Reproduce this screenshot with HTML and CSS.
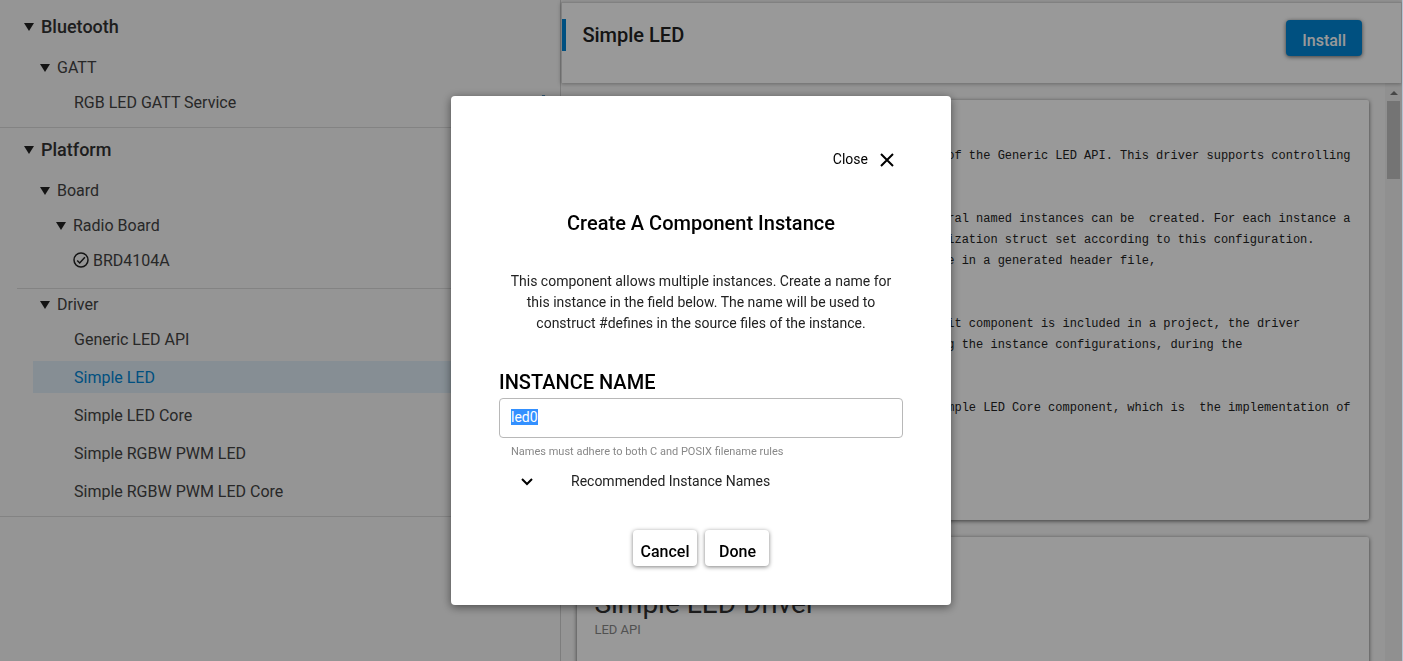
FILE: index.html
```
<!DOCTYPE html>
<html lang="en">
<head>
<meta charset="utf-8">
<title>Software Components</title>
<link rel="stylesheet" href="styles.css">
</head>
<body>
<div class="app">
  <nav class="sidebar" aria-label="Components">
    <section class="category">
      <button class="node node-root" type="button"><svg class="twisty" viewBox="0 0 10 8"><path d="M0 0h10L5 8z"/></svg>Bluetooth</button>
      <div class="group">
        <button class="node" type="button"><svg class="twisty" viewBox="0 0 10 8"><path d="M0 0h10L5 8z"/></svg>GATT</button>
        <a class="leaf" href="#rgb-gatt">RGB LED GATT Service
          <svg class="gear" viewBox="0 0 24 24"><path fill-rule="evenodd" d="M9.500 0h5v4l3 1.500 3.300-2 2.500 4.500-3.300 2v4l3.300 2-2.500 4.500-3.300-2-3 1.500v4h-5v-4l-3-1.500-3.300 2L.7 16l3.300-2v-4L.7 8l2.500-4.500 3.300 2 3-1.500zM12 8a4 4 0 1 0 0 8 4 4 0 0 0 0-8z"/></svg></a>
      </div>
    </section>
    <section class="category">
      <button class="node node-root" type="button"><svg class="twisty" viewBox="0 0 10 8"><path d="M0 0h10L5 8z"/></svg>Platform</button>
      <div class="group group-divided">
        <button class="node" type="button"><svg class="twisty" viewBox="0 0 10 8"><path d="M0 0h10L5 8z"/></svg>Board</button>
        <button class="node node-nested" type="button"><svg class="twisty" viewBox="0 0 10 8"><path d="M0 0h10L5 8z"/></svg>Radio Board</button>
        <a class="leaf leaf-installed" href="#brd4104a"><svg class="installed" viewBox="0 0 16 16"><circle cx="8" cy="8" r="7"/><path d="M4.200 8.500l2.500 2.500 5.200-5.800"/></svg>BRD4104A</a>
      </div>
      <div class="group group-driver">
        <button class="node" type="button"><svg class="twisty" viewBox="0 0 10 8"><path d="M0 0h10L5 8z"/></svg>Driver</button>
        <div class="leaves">
          <a class="leaf" href="#generic">Generic LED API</a>
          <a class="leaf leaf-active" href="#simple">Simple LED</a>
          <a class="leaf" href="#simple-core">Simple LED Core</a>
          <a class="leaf" href="#rgbw">Simple RGBW PWM LED</a>
          <a class="leaf" href="#rgbw-core">Simple RGBW PWM LED Core</a>
        </div>
      </div>
    </section>
  </nav>
  <main class="detail">
    <header class="detail-header">
      <h1 class="detail-title">Simple LED</h1>
      <button class="install" type="button">Install</button>
    </header>
    <div class="detail-body">
      <div class="cards">
        <article class="card">
<pre class="description">The Simple LED driver provides an implementation of the Generic LED API. This driver supports controlling


The Simple LED component is instantiable, so several named instances can be  created. For each instance a
configuration file is generated, with the initialization struct set according to this configuration.
These instances and counts shall be made available in a generated header file,


When the Simple LED driver and also the System Init component is included in a project, the driver
is initialized automatically by the project, using the instance configurations, during the


The Simple LED driver component depends on the Simple LED Core component, which is  the implementation of</pre>
        </article>
        <article class="card card-doc">
          <h2 class="doc-title">Simple LED Driver</h2>
          <p class="doc-sub">LED API</p>
        </article>
      </div>
      <div class="scrollbar" aria-hidden="true">
        <svg class="scroll-up" viewBox="0 0 8 4"><path d="M4 0l4 4H0z"/></svg>
        <div class="scroll-thumb"></div>
      </div>
    </div>
  </main>
</div>
<div class="backdrop">
  <form class="dialog" role="dialog" aria-labelledby="dialog-title">
    <button class="close" type="button">Close
      <svg class="close-icon" viewBox="0 0 14 14"><path d="M1 1l12 12M13 1L1 13"/></svg></button>
    <h2 class="dialog-title" id="dialog-title">Create A Component Instance</h2>
    <p class="dialog-text">This component allows multiple instances. Create a name for this instance in the field below. The name will be used to construct #defines in the source files of the instance.</p>
    <label class="field-label" for="instance-name">INSTANCE NAME</label>
    <input class="field" id="instance-name" type="text" value="led0" autocomplete="off" spellcheck="false">
    <p class="hint">Names must adhere to both C and POSIX filename rules</p>
    <button class="expander" type="button"><svg class="chevron" viewBox="0 0 12 8"><path d="M1 1l5 5 5-5"/></svg>Recommended Instance Names</button>
    <div class="actions">
      <button class="action" type="button">Cancel</button>
      <button class="action" type="submit">Done</button>
    </div>
  </form>
</div>
<script src="main.js"></script>
</body>
</html>
```
FILE: styles.css
```
* { box-sizing: border-box; }
body {
  margin: 0;
  font-family: Roboto, sans-serif;
  font-size: 16px;
  color: #333;
  background: #f8f8f8;
  border-right: 1px solid #b4c3d2;
}
h1, h2, p, pre { margin: 0; }
button {
  font: inherit;
  color: inherit;
  background: none;
  border: 0;
  padding: 0;
  cursor: pointer;
}
.app { display: flex; height: 100vh; overflow: hidden; }

.sidebar { flex: 2; min-width: 0; }
.category { padding: 6px 0 10px; border-bottom: 1px solid #dadada; }
.category + .category { padding: 1px 0 9px; }
.node {
  display: flex;
  align-items: center;
  gap: 7px;
  height: 30px;
  padding-left: 40px;
  color: #444;
}
.node-root {
  height: 40px;
  padding-left: 24px;
  font-size: 18px;
  font-weight: 500;
  color: #333;
}
.node-nested { padding-left: 56px; }
.twisty { width: 10px; height: 8px; margin-top: 2px; fill: #222; }
.group { display: flex; flex-direction: column; gap: 5px; padding-top: 6px; }
.group-divided { margin-left: 17px; padding-bottom: 13px; border-bottom: 1px solid #dadada; }
.group-divided .node { margin-left: -17px; }
.group-driver { padding-top: 0; gap: 4px; }
.leaf {
  display: flex;
  align-items: center;
  justify-content: space-between;
  height: 30px;
  padding: 0 9px 0 74px;
  color: #444;
  text-decoration: none;
}
.gear { width: 15px; height: 15px; fill: #5590bb; }
.leaf-installed { justify-content: flex-start; gap: 4px; padding-left: 56px; }
.installed { width: 16px; height: 16px; fill: none; stroke: #222; stroke-width: 1.500; }
.leaves { display: flex; flex-direction: column; gap: 6px; margin-left: 33px; }
.leaves .leaf { height: 32px; padding-left: 41px; }
.leaves .leaf-active { background: #dfedf7; color: #0086d6; }

.detail {
  flex: 3;
  min-width: 0;
  display: flex;
  flex-direction: column;
  padding-top: 2px;
  border-left: 1px solid #d0d0d0;
}
.detail-header {
  position: relative;
  display: flex;
  justify-content: space-between;
  align-items: flex-start;
  height: 81px;
  flex: none;
  padding: 16px 39px 0 0;
  background: #fff;
  border: 1px solid #d8d8d8;
  border-width: 1px 1px 0;
  box-shadow: 0 1px 4px rgba(0, 0, 0, .3);
}
.detail-title {
  padding-left: 16px;
  border-left: 4px solid #0086d6;
  font-size: 20px;
  line-height: 32px;
  font-weight: 500;
  color: #222;
}
.install {
  height: 36px;
  margin-top: 1px;
  padding: 4px 16px 0;
  border-radius: 4px;
  background: #0086d6;
  color: #fff;
  font-weight: 500;
  box-shadow: 0 1px 4px rgba(0, 0, 0, .6);
}
.detail-body { flex: 1; min-height: 0; display: flex; }
.cards {
  flex: 1;
  min-width: 0;
  display: flex;
  flex-direction: column;
  gap: 17px;
  padding: 17px 16px 0;
  overflow: hidden;
}
.card {
  flex: none;
  height: 420px;
  padding: 46px 17px 0;
  background: #fff;
  border-radius: 2px;
  box-shadow: 0 1px 4px rgba(0, 0, 0, .6);
}
.description {
  font-family: "Liberation Mono", monospace;
  font-size: 12px;
  line-height: 21px;
  color: #222;
}
.card-doc { padding-top: 49px; }
.doc-title { font-size: 28px; line-height: 36px; font-weight: 400; color: #333; }
.doc-sub { font-size: 13px; line-height: 16px; font-weight: 400; color: #888; }
.scrollbar {
  width: 17px;
  padding: 8px 2px 0;
  background: #f1f1f1;
  display: flex;
  flex-direction: column;
  gap: 6px;
}
.scroll-up { width: 8px; height: 4px; fill: #777; align-self: center; }
.scroll-thumb { height: 78px; background: #c1c1c1; }

.backdrop {
  position: fixed;
  inset: 0 1px 0 0;
  display: flex;
  justify-content: center;
  align-items: flex-start;
  padding-top: 96px;
  background: rgba(0, 0, 0, .4);
}
.dialog {
  display: flex;
  flex-direction: column;
  width: 500px;
  padding: 53px 48px 39px;
  background: #fff;
  border-radius: 4px;
  color: #000;
  box-shadow: 0 2px 10px rgba(0, 0, 0, .5);
}
.close {
  align-self: flex-end;
  display: flex;
  align-items: center;
  gap: 12px;
  height: 20px;
  margin-right: 9px;
  font-size: 14px;
}
.close-icon { width: 14px; height: 14px; margin-top: 1px; fill: none; stroke: #000; stroke-width: 2; }
.dialog-title {
  margin-top: 39px;
  font-size: 20px;
  line-height: 30px;
  font-weight: 500;
  text-align: center;
}
.dialog-text {
  margin: 33px 8px 0;
  font-size: 14px;
  line-height: 21px;
  text-align: center;
  color: #222;
}
.field-label { margin-top: 36px; font-size: 20px; line-height: 24px; font-weight: 500; }
.field {
  height: 40px;
  margin: 4px 0 0;
  padding: 0 11px 2px;
  border: 1px solid #b8b8b8;
  border-radius: 4px;
  outline: 0;
  font: 14px Roboto, sans-serif;
}
.field::selection { background: #3390ff; color: #fff; }
.hint { margin: 6px 12px 0; font-size: 11px; line-height: 16px; color: #888; }
.expander {
  display: flex;
  align-items: center;
  gap: 38px;
  height: 20px;
  margin-top: 11px;
  padding-left: 22px;
  font-size: 14px;
  color: #222;
}
.chevron { width: 12px; height: 8px; margin-top: 2px; fill: none; stroke: #000; stroke-width: 2; }
.actions { display: flex; justify-content: center; gap: 8px; margin-top: 39px; }
.action {
  height: 36px;
  min-width: 64px;
  padding: 6px 8px 0;
  border-radius: 4px;
  font-weight: 500;
  background: #fff;
  box-shadow: 0 1px 4px rgba(0, 0, 0, .5);
}
```
FILE: main.js
```
const nameField = document.getElementById("instance-name");
nameField.focus();
nameField.select();
```
